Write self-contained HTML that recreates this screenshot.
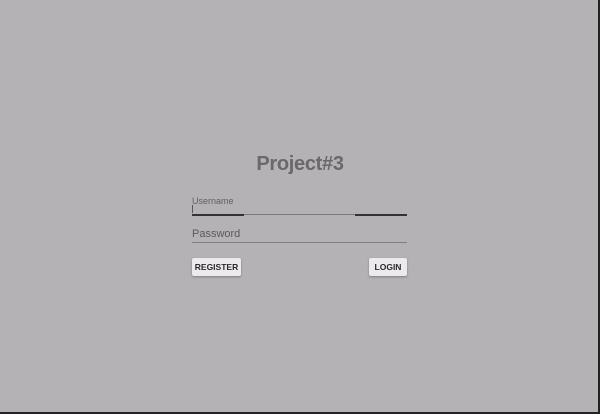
<!DOCTYPE html>
<html><head><style>
body{margin:0;width:600px;height:414px;background:#b4b2b5;position:relative;overflow:hidden;font-family:"Liberation Sans",sans-serif}
.br{position:absolute;right:0;top:0;width:2px;height:414px;background:#222}
.bb{position:absolute;left:0;bottom:0;width:600px;height:2px;background:#222}
.t{position:absolute;left:0;width:600px;top:153px;text-align:center;font-size:20px;font-weight:bold;color:#69686a;letter-spacing:-0.3px}
.lab{position:absolute;left:192px;top:196px;font-size:9px;color:#5f5e60}
.cur{position:absolute;left:192px;top:205px;width:1px;height:8px;background:#555}
.u1{position:absolute;left:192px;top:214px;width:215px;height:1px;background:#7a797b}
.d{position:absolute;top:214px;height:2px;background:#333}
.pw{position:absolute;left:192px;top:228px;font-size:11px;color:#59585a}
.u2{position:absolute;left:192px;top:242px;width:215px;height:1px;background:#7f7e80}
.btn{position:absolute;top:258px;height:18px;background:#eceaec;border-radius:2px;box-shadow:0 1px 2px rgba(0,0,0,.3);font-size:8.5px;font-weight:bold;color:#2a2a2a;text-align:center;line-height:18px}
</style></head><body>
<div class="t">Project#3</div>
<div class="lab">Username</div><div class="cur"></div>
<div class="u1"></div><div class="d" style="left:192px;width:52px"></div><div class="d" style="left:355px;width:52px"></div>
<div class="pw">Password</div><div class="u2"></div>
<div class="btn" style="left:192px;width:49px">REGISTER</div>
<div class="btn" style="left:369px;width:38px">LOGIN</div>
<div class="br"></div><div class="bb"></div>
</body></html>
